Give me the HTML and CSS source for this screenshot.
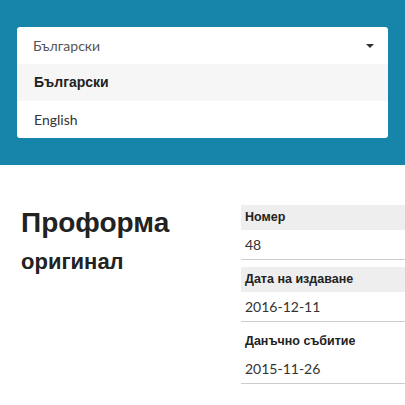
FILE: index.html
```html
<!DOCTYPE html>
<html>
<head>
<meta charset="utf-8">
<link rel="stylesheet" href="styles.css">
</head>
<body>
<header class="top">
  <div class="dropdown">
    <div class="select">
      <span>Български</span>
      <span class="caret"></span>
    </div>
    <div class="option active">Български</div>
    <div class="option">English</div>
  </div>
</header>
<main class="doc">
  <div class="title">
    <h1>Проформа</h1>
    <h2>оригинал</h2>
  </div>
  <div class="meta">
    <div class="group">
      <div class="label shaded">Номер</div>
      <div class="value">48</div>
    </div>
    <div class="group">
      <div class="label shaded">Дата на издаване</div>
      <div class="value">2016-12-11</div>
    </div>
    <div class="group">
      <div class="label">Данъчно събитие</div>
      <div class="value">2015-11-26</div>
    </div>
  </div>
</main>
</body>
</html>
```

FILE: styles.css
```css
html, body {
  margin: 0;
  padding: 0;
  background: #fff;
  overflow: hidden;
}
body {
  width: 405px;
}
.top {
  background: #1685a9;
  padding: 27px 17px 27px 17px;
  height: 111px;
}
.dropdown {
  width: 371px;
  background: #fff;
  border-radius: 3px;
  overflow: hidden;
  font-family: Lato, "Liberation Sans", sans-serif;
  font-size: 14px;
}
.select {
  height: 37px;
  display: flex;
  align-items: center;
  justify-content: space-between;
  padding: 0 14px 0 16px;
  color: #555;
}
.caret {
  width: 0;
  height: 0;
  border-left: 4px solid transparent;
  border-right: 4px solid transparent;
  border-top: 4px solid #333;
}
.option {
  height: 37px;
  line-height: 37px;
  padding-left: 17px;
  color: #333;
}
.option.active {
  background: #f6f6f6;
  font-family: "Liberation Sans", Arial, sans-serif;
  font-weight: bold;
  color: #222;
}
.doc {
  display: flex;
  padding-top: 40px;
}
.title {
  flex: 0 0 auto;
  width: 220px;
  padding-left: 21px;
  color: #222;
  font-family: "Liberation Sans", Arial, sans-serif;
}
.title h1 {
  margin: 0;
  font-size: 28px;
  line-height: 36px;
  font-weight: bold;
}
.title h2 {
  margin: 6px 0 0 0;
  font-size: 22px;
  line-height: 30px;
  font-weight: bold;
}
.meta {
  flex: 0 0 auto;
  width: 170px;
}
.group + .group {
  margin-top: 7px;
}
.label {
  height: 25px;
  line-height: 25px;
  padding-left: 4px;
  font-family: "Liberation Sans", Arial, sans-serif;
  font-weight: bold;
  font-size: 12.5px;
  color: #222;
}
.label.shaded {
  background: #eee;
}
.value {
  height: 29px;
  line-height: 29px;
  padding-left: 4px;
  border-bottom: 1px solid #ccc;
  font-family: Lato, "Liberation Sans", sans-serif;
  font-size: 14px;
  color: #333;
}
```
